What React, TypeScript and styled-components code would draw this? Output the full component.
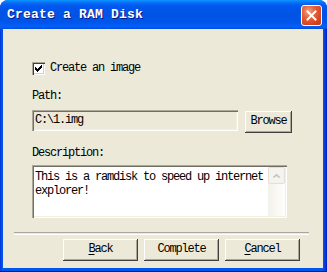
import React from "react";
import styled, { createGlobalStyle } from "styled-components";

const Global = createGlobalStyle`
  html, body { margin: 0; padding: 0; background: #fff; }
  body { font-family: "Liberation Mono", "DejaVu Sans Mono", monospace; }
`;

const Window = styled.div`
  width: 327px;
  height: 272px;
  box-sizing: border-box;
  display: flex;
  flex-direction: column;
  border-radius: 8px 8px 0 0;
  overflow: hidden;
  background: linear-gradient(90deg, #0831d9 0px, #0055ea 2px, #0055ea 323px, #0a3ed0 325px, #0019cf 327px);
  border-bottom: 1px solid #0019cf;
`;

const TitleBar = styled.div`
  height: 29px;
  flex: none;
  box-sizing: border-box;
  display: flex;
  align-items: flex-start;
  justify-content: space-between;
  padding: 5px 5px 0 7px;
  background: linear-gradient(
    180deg,
    #0997ff 0px,
    #0a6af5 3px,
    #0058ee 6px,
    #0054e3 14px,
    #0055ea 22px,
    #0060f8 26px,
    #0058ee 28px,
    #0046d5 29px
  );
`;

const Title = styled.span`
  font-family: "Liberation Mono", monospace;
  font-weight: bold;
  font-size: 13px;
  letter-spacing: 0.2px;
  line-height: 19px;
  color: #fff;
  text-shadow: 1px 1px 0 #0a1883;
  white-space: pre;
`;

const CloseButton = styled.div`
  width: 21px;
  height: 21px;
  box-sizing: border-box;
  border: 1px solid #fff;
  border-radius: 3px;
  background: radial-gradient(circle at 35% 30%, #f0a58a 0%, #e5633f 35%, #d7451f 70%, #c13a16 100%);
  display: flex;
  align-items: center;
  justify-content: center;
`;

const Client = styled.div`
  flex: 1;
  margin: 0 4px 3px 3px;
  background: #ece9d8;
  display: flex;
  flex-direction: column;
  color: #000;
  font-family: "Liberation Mono", "DejaVu Sans Mono", monospace;
  font-size: 12px;
  letter-spacing: -1.2px;
  line-height: 13px;
`;

const Body = styled.div`
  display: flex;
  flex-direction: column;
  padding: 33px 36px 0 29px;
`;

const CheckRow = styled.label`
  display: flex;
  align-items: center;
  gap: 5px;
  height: 13px;
`;

const CheckBox = styled.span`
  width: 13px;
  height: 13px;
  box-sizing: border-box;
  background: #fff;
  box-shadow: inset 1px 1px 0 #aca899, inset 2px 2px 0 #404040, inset -1px -1px 0 #fff, inset -2px -2px 0 #d4d0c8;
  display: flex;
  padding: 3px;
`;

const Label = styled.div<{ $top: number }>`
  margin-top: ${(p) => p.$top}px;
  height: 13px;
`;

const FieldRow = styled.div`
  display: flex;
  align-items: flex-start;
  gap: 7px;
  margin: 7px -5px 0 0;
`;

const TextField = styled.div<{ $bg?: string }>`
  flex: 1;
  height: 21px;
  box-sizing: border-box;
  padding: 4px 3px;
  background: ${(p) => p.$bg ?? "#fff"};
  box-shadow: inset 1px 1px 0 #aca899, inset 2px 2px 0 #716f64, inset -1px -1px 0 #fff, inset -2px -2px 0 #f1efe2;
  white-space: pre;
`;

const Button = styled.div<{ $w?: number; $mt?: number }>`
  width: ${(p) => p.$w ?? 75}px;
  height: 22px;
  margin-top: ${(p) => p.$mt ?? 0}px;
  box-sizing: border-box;
  background: #ece9d8;
  box-shadow: inset -1px -1px 0 #404040, inset 1px 1px 0 #fff, inset -2px -2px 0 #aca899;
  display: flex;
  align-items: center;
  justify-content: center;
  padding-bottom: 1px;
  u { text-decoration: underline; text-underline-offset: 2px; }
`;

const TextBox = styled.div`
  margin-top: 5px;
  height: 53px;
  box-sizing: border-box;
  padding: 2px;
  background: #fff;
  box-shadow: inset 1px 1px 0 #aca899, inset 2px 2px 0 #716f64, inset -1px -1px 0 #fff, inset -2px -2px 0 #f1efe2;
  display: flex;
`;

const TextContent = styled.div`
  flex: 1;
  padding: 3px 1px;
  line-height: 14px;
`;

const ScrollBar = styled.div`
  width: 17px;
  display: flex;
  flex-direction: column;
  background: linear-gradient(90deg, #f3f1ec, #fefefb);
`;

const ScrollButton = styled.div`
  height: 17px;
  box-sizing: border-box;
  border: 1px solid #e2e0d6;
  border-radius: 2px;
  background: #f4f3ee;
  display: flex;
  align-items: center;
  justify-content: center;
`;

const Separator = styled.div`
  margin: 14px 14px 0 11px;
  height: 1px;
  border-top: 1px solid #aca899;
  border-bottom: 1px solid #fff;
`;

const ButtonRow = styled.div`
  display: flex;
  justify-content: flex-end;
  gap: 6px;
  padding: 4px 23px 0 0;
`;

const checkCols = [2, 3, 4, 3, 2, 1, 0];

export default function App() {
  return (
    <>
      <Global />
      <Window>
        <TitleBar>
          <Title>Create a RAM Disk</Title>
          <CloseButton>
            <svg width="11" height="11" viewBox="0 0 11 11">
              <path d="M1.5 1.5 L9.5 9.5 M9.5 1.5 L1.5 9.5" stroke="#fff" strokeWidth="2" strokeLinecap="square" />
            </svg>
          </CloseButton>
        </TitleBar>
        <Client>
          <Body>
            <CheckRow>
              <CheckBox>
                <svg width="7" height="7" viewBox="0 0 7 7" shapeRendering="crispEdges">
                  {checkCols.map((y, x) => (
                    <rect key={x} x={x} y={y} width="1" height="3" fill="#000" />
                  ))}
                </svg>
              </CheckBox>
              <span>Create an image</span>
            </CheckRow>
            <Label $top={15}>Path:</Label>
            <FieldRow>
              <TextField $bg="#ece9d8">C:\1.img</TextField>
              <Button $w={47} $mt={1}>Browse</Button>
            </FieldRow>
            <Label $top={14}>Description:</Label>
            <TextBox>
              <TextContent>
                This is a ramdisk to speed up internet
                <br />
                explorer!
              </TextContent>
              <ScrollBar>
                <ScrollButton>
                  <svg width="7" height="4" viewBox="0 0 7 4">
                    <path d="M0.5 3.5 L3.5 0.8 L6.5 3.5" stroke="#c6c5bb" strokeWidth="1.6" fill="none" />
                  </svg>
                </ScrollButton>
              </ScrollBar>
            </TextBox>
          </Body>
          <Separator />
          <ButtonRow>
            <Button>
              <span><u>B</u>ack</span>
            </Button>
            <Button>Complete</Button>
            <Button>
              <span><u>C</u>ancel</span>
            </Button>
          </ButtonRow>
        </Client>
      </Window>
    </>
  );
}
